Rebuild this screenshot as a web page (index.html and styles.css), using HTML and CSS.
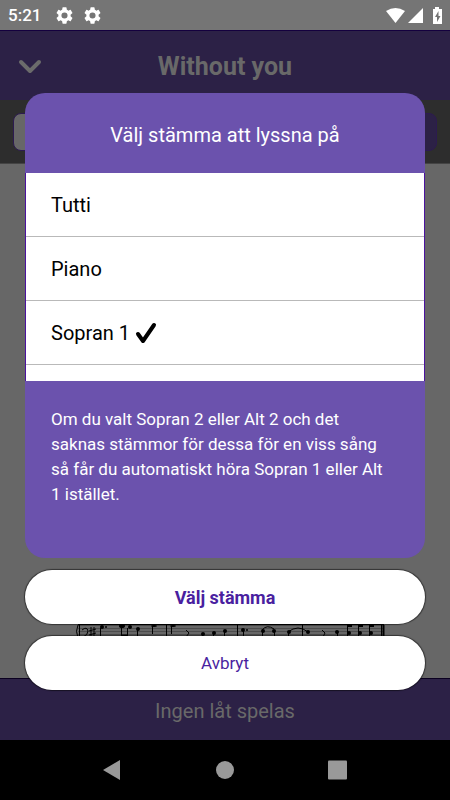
FILE: index.html
```html
<!DOCTYPE html>
<html lang="sv">
<head>
<meta charset="utf-8">
<meta name="viewport" content="width=device-width, initial-scale=1">
<title>Without you</title>
<link rel="stylesheet" href="styles.css">
</head>
<body>
<div class="statusbar">
  <span class="clock">5:21</span>
  <svg class="gear" viewBox="2 2 20 20" aria-hidden="true"><path d="M19.14 12.94c.04-.3.06-.61.06-.94s-.02-.64-.07-.94l2.03-1.58a.49.49 0 0 0 .12-.61l-1.92-3.32a.49.49 0 0 0-.59-.22l-2.39.96a7 7 0 0 0-1.62-.94l-.36-2.54A.48.48 0 0 0 13.92 2.400h-3.840a.48.48 0 0 0-.48.410l-.36 2.540c-.59.240-1.130.570-1.620.940l-2.390-.960a.49.49 0 0 0-.59.220L2.740 8.870a.48.48 0 0 0 .12.610l2.030 1.580c-.05.300-.09.630-.09.940s.02.640.07.940l-2.030 1.580a.49.49 0 0 0-.12.610l1.920 3.320c.12.220.370.290.590.220l2.390-.960c.5.380 1.030.700 1.620.940l.360 2.540c.05.240.240.410.480.410h3.840c.240 0 .440-.170.470-.410l.360-2.540c.59-.240 1.130-.560 1.620-.940l2.390.960c.220.080.470 0 .590-.220l1.920-3.320a.48.48 0 0 0-.12-.610zM12 15.600a3.600 3.600 0 1 1 0-7.200 3.600 3.600 0 0 1 0 7.200z"/></svg>
  <svg class="gear" viewBox="2 2 20 20" aria-hidden="true"><path d="M19.14 12.94c.04-.3.06-.61.06-.94s-.02-.64-.07-.94l2.03-1.58a.49.49 0 0 0 .12-.61l-1.92-3.32a.49.49 0 0 0-.59-.22l-2.39.96a7 7 0 0 0-1.62-.94l-.36-2.54A.48.48 0 0 0 13.92 2.400h-3.840a.48.48 0 0 0-.48.410l-.36 2.540c-.59.240-1.130.570-1.620.940l-2.390-.960a.49.49 0 0 0-.59.220L2.740 8.870a.48.48 0 0 0 .12.610l2.030 1.580c-.05.300-.09.630-.09.940s.02.640.07.940l-2.030 1.580a.49.49 0 0 0-.12.610l1.920 3.320c.12.220.370.290.590.220l2.390-.960c.5.380 1.030.700 1.620.940l.360 2.540c.05.240.240.410.480.410h3.840c.240 0 .440-.170.470-.410l.360-2.540c.59-.240 1.130-.560 1.620-.940l2.390.960c.220.080.470 0 .590-.220l1.920-3.320a.48.48 0 0 0-.12-.610zM12 15.600a3.600 3.600 0 1 1 0-7.200 3.600 3.600 0 0 1 0 7.200z"/></svg>
  <svg class="signals" viewBox="-2 -1 58 18" aria-hidden="true">
    <path d="M0 4Q9.500-2 19 4L9.500 16z"/>
    <path d="M37 1v15H22z"/>
    <path d="M49 0h4v2h3v15h-9V2h2z"/>
    <path class="bolt" d="M52.500 4 49 10h2v5l3.500-6h-2z"/>
  </svg>
</div>
<div class="app">
  <header class="appbar">
    <button class="back" type="button" aria-label="Stäng">
      <svg viewBox="0 0 24 16" aria-hidden="true"><path d="M3 3l9 9 9-9"/></svg>
    </button>
    <h1>Without you</h1>
  </header>
  <div class="tools">
    <button class="tool light" type="button" aria-label="Noter"></button>
    <button class="tool dark" type="button" aria-label="Stämma"></button>
  </div>
  <main class="sheet">
    <svg class="score" viewBox="0 0 312 14" aria-hidden="true">
      <path class="staff" d="M3 1.500H309M3 4.500H309M3 7.500H309M3 10.500H309"/>
      <path d="M3 .500H309M3 12.500H309"/>
      <path d="M4.500 1v13M91.500 1v13M162.500 1v13M227.500 1v13M306.500 1v13"/>
      <path class="end" d="M308.500 1v13"/>
      <path d="M3 1Q0 7 3 14M7 6Q12 2 13 7Q13 11 8 13M16 3v10M19 3v10M14 7l7-2M14 11l7-2M25.500 4v10M46.500 2v10M52.500 4v9M62.500 5v9M77.500 2v8M96.500 2v8M111 6l3 3-3 4M127.500 9v5M138.500 8v5M149.500 6v7M168.500 6v8M187.500 6v8M199.500 6v8M213.500 7v7M187 6Q192 0 199 5M213 8Q223 0 233 8M247 6l3 3-2 4M262.500 7v6M272.500 2v10M283.500 2v10M294.500 2v10"/>
      <path class="beam" d="M46 11.500h7M272 2h5M283 2h5M294 2h5"/>
      <g class="notes"><ellipse cx="27" cy="3" rx="2" ry="2"/><circle cx="31" cy="3" r="1"/><ellipse cx="47" cy="2" rx="3" ry="2"/><ellipse cx="55" cy="3" rx="2" ry="2"/><ellipse cx="63" cy="5" rx="2" ry="2"/><ellipse cx="79" cy="2" rx="3" ry="1"/><ellipse cx="98" cy="2" rx="3" ry="1"/><ellipse cx="128" cy="10" rx="2" ry="2"/><ellipse cx="139" cy="9" rx="2" ry="2"/><ellipse cx="150" cy="7" rx="2" ry="2"/><ellipse cx="168" cy="6" rx="2" ry="2"/><circle cx="172" cy="6" r="1"/><ellipse cx="188" cy="7" rx="2" ry="2"/><ellipse cx="199" cy="7" rx="2" ry="2"/><ellipse cx="214" cy="8" rx="2" ry="2"/><ellipse cx="233" cy="8" rx="2" ry="2"/><ellipse cx="262" cy="8" rx="2" ry="2"/><ellipse cx="274" cy="9" rx="2" ry="2"/><ellipse cx="285" cy="9" rx="2" ry="2"/><ellipse cx="296" cy="9" rx="2" ry="2"/></g>
    </svg>
  </main>
  <footer class="player">Ingen låt spelas</footer>
  <div class="overlay">
    <section class="dialog" role="dialog" aria-labelledby="dialog-title">
      <h2 id="dialog-title">Välj stämma att lyssna på</h2>
      <ul class="parts">
        <li><button type="button">Tutti</button></li>
        <li><button type="button">Piano</button></li>
        <li><button type="button" aria-pressed="true">Sopran 1<svg class="check" viewBox="0 0 22 22" aria-hidden="true"><path d="M3 12l5 7L19 3"/></svg></button></li>
        <li><button type="button" aria-label="Sopran 2"></button></li>
      </ul>
      <p class="note">Om du valt Sopran 2 eller Alt 2 och det saknas stämmor för dessa för en viss sång så får du automatiskt höra Sopran 1 eller Alt 1 istället.</p>
    </section>
    <button class="action primary" type="button">Välj stämma</button>
    <button class="action" type="button">Avbryt</button>
  </div>
</div>
<nav class="sysnav">
  <button type="button" aria-label="Tillbaka"><svg viewBox="0 0 20 20" aria-hidden="true"><path d="M18 0v20L1 10z"/></svg></button>
  <button type="button" aria-label="Hem"><svg viewBox="0 0 20 20" aria-hidden="true"><circle cx="10" cy="10" r="9"/></svg></button>
  <button type="button" aria-label="Översikt"><svg viewBox="0 0 20 20" aria-hidden="true"><rect x="0" y="0.500" width="19" height="19" rx="1"/></svg></button>
</nav>
</body>
</html>
```
FILE: styles.css
```css
* {
  box-sizing: border-box;
}

body {
  margin: 0;
  min-height: 100vh;
  display: flex;
  flex-direction: column;
  background: #000;
  color: #000;
  font-family: Roboto, "Liberation Sans", sans-serif;
}

button {
  margin: 0;
  padding: 0;
  border: 0;
  background: none;
  color: inherit;
  font: inherit;
}

svg {
  display: block;
}

.statusbar {
  height: 30px;
  padding: 0 8px;
  display: flex;
  align-items: center;
  background: #757575;
  color: #fff;
  fill: #fff;
}

.clock {
  width: 48px;
  font-size: 17px;
  font-weight: 500;
}

.gear {
  width: 17px;
  height: 17px;
  margin-right: 11px;
}

.signals {
  width: 58px;
  height: 18px;
  margin-left: auto;
}

.bolt {
  fill: #757575;
}

.app {
  position: relative;
  flex: 1;
  display: flex;
  flex-direction: column;
}

.appbar {
  height: 70px;
  padding: 2px 18px 0;
  display: grid;
  grid-template-columns: 24px 1fr 24px;
  align-items: center;
  border-top: 1px solid #14003e;
  background: #2c2146;
  color: #696969;
}

.appbar h1 {
  margin: 0;
  font-size: 25px;
  font-weight: 700;
  line-height: 30px;
  text-align: center;
}

.back svg {
  width: 24px;
  height: 16px;
  fill: none;
  stroke: #6b6b6b;
  stroke-width: 4;
  stroke-linecap: round;
  stroke-linejoin: round;
}

.tools {
  height: 64px;
  padding: 0 13px;
  display: flex;
  align-items: center;
  justify-content: space-between;
  border-bottom: 1px solid #444;
  background: #2d2d2d;
}

.tool {
  width: 96px;
  height: 38px;
  border: 1px solid #2c1b50;
  border-radius: 8px;
}

.light {
  background: #676767;
}

.dark {
  background: #2c2146;
}

.sheet {
  flex: 1;
  padding-bottom: 40px;
  display: flex;
  align-items: flex-end;
  justify-content: center;
  background: #676767;
}

.score {
  width: 312px;
  height: 14px;
  margin-left: 12px;
  fill: none;
  stroke: #000;
}

.score .staff {
  stroke: #4c4c4c;
}

.score .beam,
.score .end {
  stroke-width: 2;
}

.notes {
  fill: #000;
  stroke: none;
}

.player {
  height: 62px;
  padding-top: 2px;
  display: flex;
  align-items: center;
  justify-content: center;
  border-top: 1px solid #0b0020;
  background: #2c2146;
  color: #696969;
  font-size: 20px;
}

.overlay {
  position: absolute;
  inset: 0;
  padding: 63px 25px 50px;
  display: flex;
  flex-direction: column;
  gap: 12px;
}

.dialog {
  flex: 1;
  display: flex;
  flex-direction: column;
  border-radius: 20px;
  background: #6b52ad;
  color: #fff;
  overflow: hidden;
}

.dialog h2 {
  margin: 0;
  padding: 30px 24px 25px;
  font-size: 20px;
  font-weight: 400;
  line-height: 25px;
  text-align: center;
}

.parts {
  height: 208px;
  margin: 0;
  padding: 0;
  list-style: none;
  overflow: hidden;
  border: 1px solid #4b129f;
  border-width: 0 1px;
  background: #fff;
  color: #000;
}

.parts button {
  width: 100%;
  height: 64px;
  padding: 0 25px;
  display: flex;
  align-items: center;
  gap: 5px;
  border-bottom: 1px solid #b9b9b9;
  font-size: 20px;
}

.check {
  width: 22px;
  height: 22px;
  fill: none;
  stroke: #000;
  stroke-width: 4;
  stroke-linecap: round;
  stroke-linejoin: round;
}

.note {
  margin: 0;
  padding: 26px 32px 26px 26px;
  font-size: 17px;
  line-height: 25px;
}

.action {
  height: 54px;
  border-radius: 27px;
  background: #fff;
  box-shadow: 0 0 1px 1px rgba(0, 0, 0, 0.5);
  color: #4a1fa0;
  font-size: 17px;
}

.primary {
  font-size: 18px;
  font-weight: 700;
}

.sysnav {
  height: 60px;
  padding: 0 55px;
  display: grid;
  grid-template-columns: repeat(3, 1fr);
  place-items: center;
  background: #000;
  fill: #999;
}

.sysnav svg {
  width: 20px;
  height: 20px;
}
```
